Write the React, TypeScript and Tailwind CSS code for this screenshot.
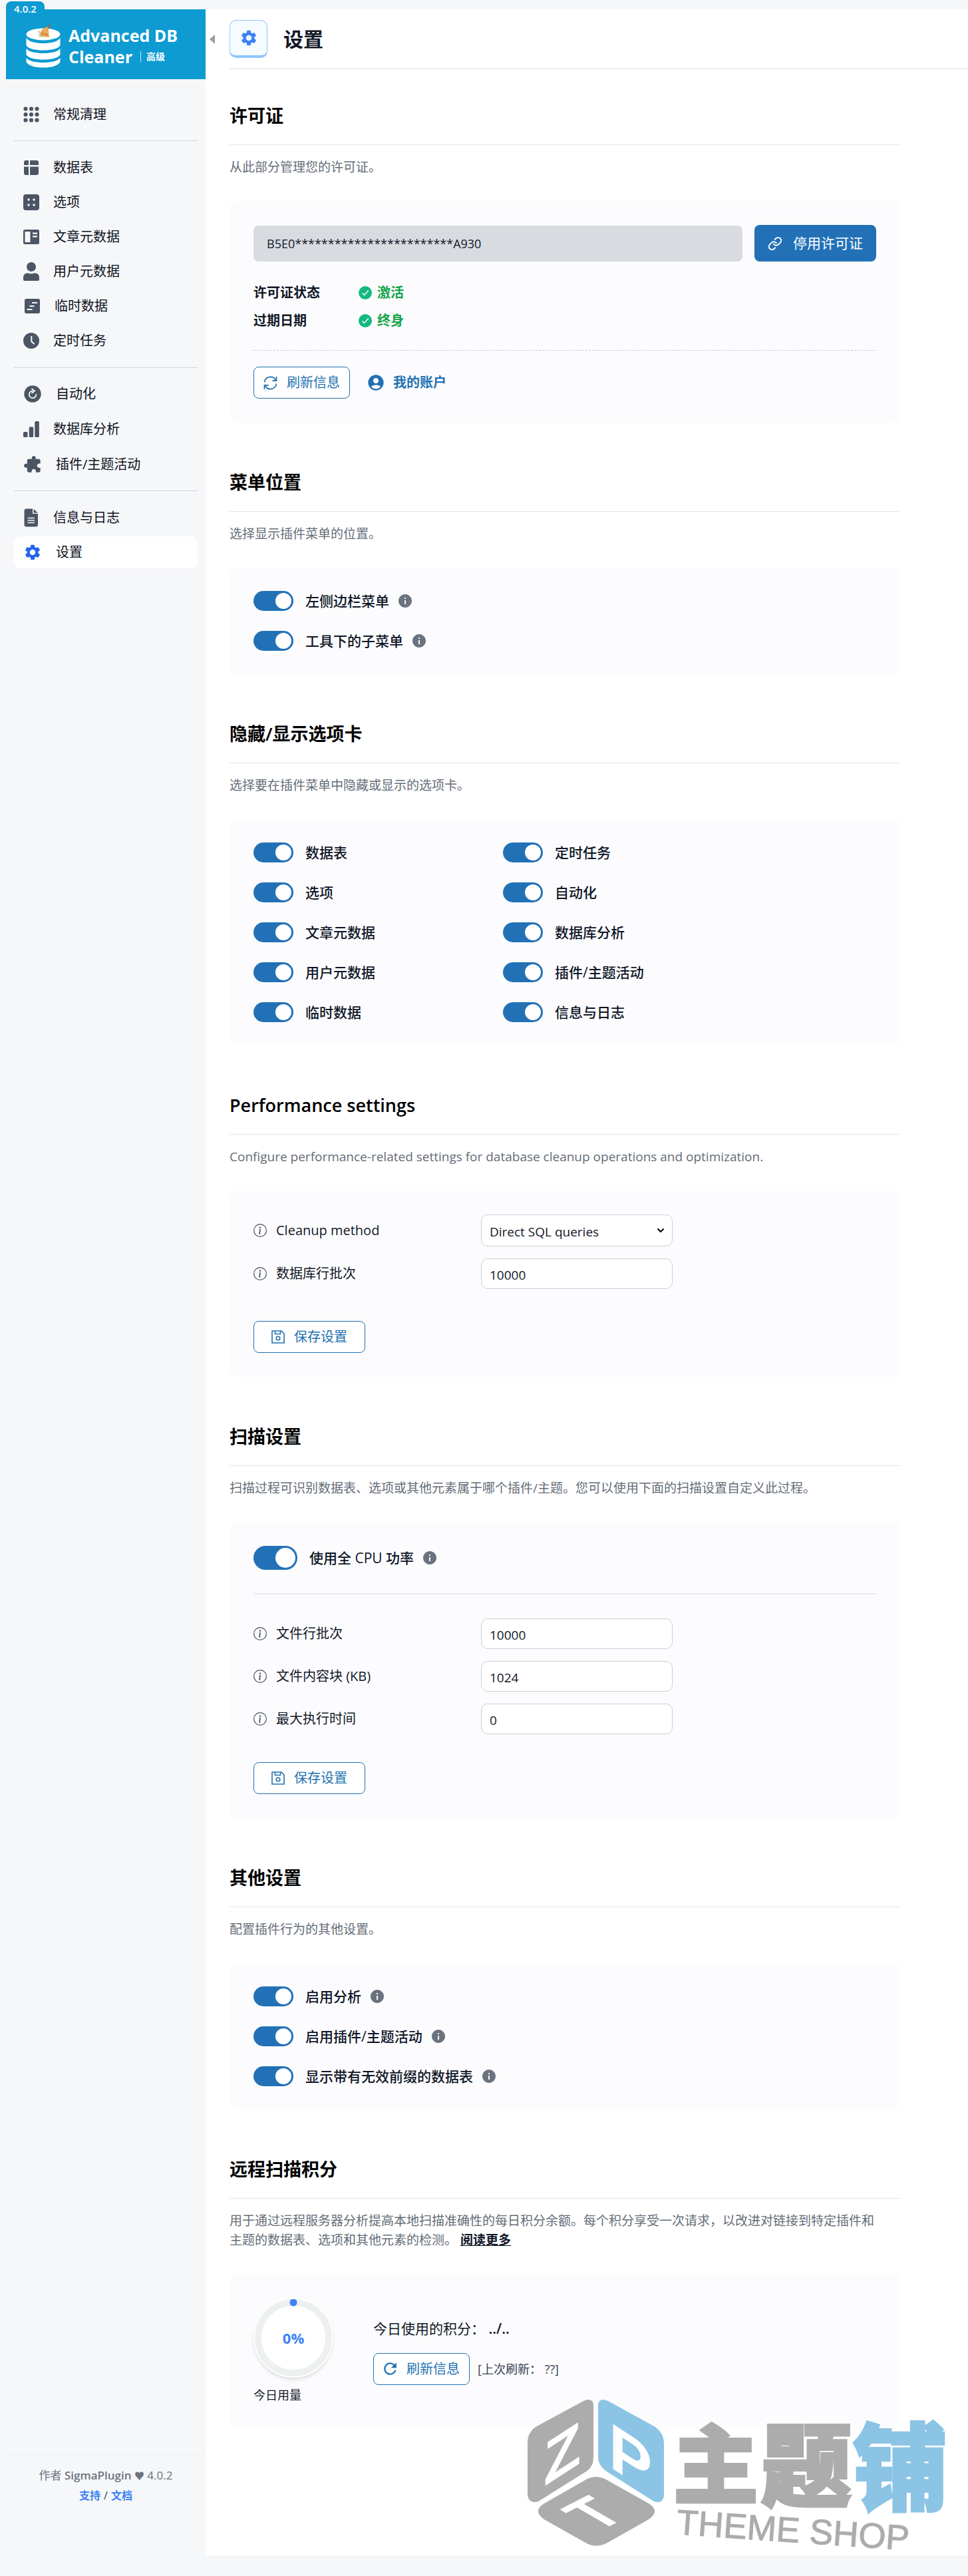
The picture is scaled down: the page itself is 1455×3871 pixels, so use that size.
import type { ReactNode } from "react";
import { Link as LinkIcon, ChevronDown } from "lucide-react";
import { MdAccountCircle, MdExtension, MdInfo, MdRefresh, MdSettings } from "react-icons/md";
import { BsInfoCircle } from "react-icons/bs";

const FONT = "font-['Open_Sans','Noto_Sans_CJK_SC',sans-serif]";

/* ---------- icons ---------- */

const GridDots = () => (
  <svg width="24" height="24" viewBox="0 0 24 24" fill="currentColor" aria-hidden="true">
    {[3.5, 12, 20.5].flatMap((y) => [3.5, 12, 20.5].map((x) => <circle key={`${x}-${y}`} cx={x} cy={y} r="3.1" />))}
  </svg>
);
const TableIcon = () => (
  <svg width="24" height="24" viewBox="0 0 24 24" fill="currentColor" aria-hidden="true">
    <path d="M4 1h4v7H1V4a3 3 0 0 1 3-3zM10 1h10a3 3 0 0 1 3 3v4H10zM1 10.500h7V23H4a3 3 0 0 1-3-3zM10 10.500H23V20a3 3 0 0 1-3 3h-10z" />
  </svg>
);
const OptionsIcon = () => (
  <svg width="24" height="24" viewBox="0 0 24 24" aria-hidden="true">
    <rect width="24" height="24" rx="4" fill="currentColor" />
    {[8, 16].flatMap((y) => [8, 16].map((x) => <circle key={`${x}-${y}`} cx={x} cy={y} r="1.800" fill="#f6f7f9" />))}
  </svg>
);
const ArticleIcon = () => (
  <svg width="24" height="24" viewBox="0 0 24 24" aria-hidden="true">
    <rect y="1" width="24" height="22" rx="2.500" fill="currentColor" />
    <path d="M2.500 4h8v16h-8zM14 5.500h7v2.300h-7zM14 10.300h7v2.300h-7z" fill="#f6f7f9" />
  </svg>
);
const UserIcon = () => (
  <svg width="24" height="28" viewBox="0 0 24 28" fill="currentColor" aria-hidden="true">
    <circle cx="12" cy="7" r="7" />
    <path d="M0 26v-3c0-4 2.500-6.500 6.500-6.500 1.800 0 3 .8 5.500.8s3.700-.8 5.500-.8c4 0 6.500 2.500 6.500 6.500v3c0 1.200-.8 2-2 2H2c-1.200 0-2-.8-2-2z" />
  </svg>
);
const TransientIcon = () => (
  <svg width="26" height="24" viewBox="0 0 26 24" aria-hidden="true">
    <rect x="2" y="1" width="23" height="22" rx="2.500" fill="currentColor" />
    <path d="M13 6h8v2h-8zM9.500 11h7v2h-7zM5.500 16h8v2h-8z" fill="#f6f7f9" />
  </svg>
);
const ClockIcon = () => (
  <svg width="24" height="24" viewBox="0 0 24 24" aria-hidden="true">
    <circle cx="12" cy="12" r="12" fill="currentColor" />
    <path d="M12.300 5v8l4.200 4" fill="none" stroke="#f6f7f9" strokeWidth="2" />
  </svg>
);
const AutomationIcon = () => (
  <svg width="28" height="28" viewBox="0 0 28 28" aria-hidden="true">
    <circle cx="14" cy="14" r="12.700" fill="currentColor" />
    <path d="M14.500 9.500A5.300 5.300 0 1 0 19.300 14" fill="none" stroke="#f6f7f9" strokeWidth="1.800" />
    <path d="M12.500 6l4.500 3.500-4.500 3.500" fill="none" stroke="#f6f7f9" strokeWidth="1.800" />
  </svg>
);
const BarsIcon = () => (
  <svg width="24" height="24" viewBox="0 0 24 24" fill="currentColor" aria-hidden="true">
    <rect y="16" width="6.500" height="8" rx="1.500" />
    <rect x="8.700" y="8.500" width="6.500" height="15.500" rx="1.500" />
    <rect x="17.300" width="6.500" height="24" rx="1.500" />
  </svg>
);
const DocIcon = () => (
  <svg width="24" height="28" viewBox="0 0 24 28" aria-hidden="true">
    <path d="M4 .5h10V8h8v16.500a3 3 0 0 1-3 3H4.500a3 3 0 0 1-3-3v-21a3 3 0 0 1 2.500-3zM15.500 1L22 6.800h-6.500z" fill="currentColor" />
    <path d="M6.500 14.500h10.500M6.500 18h10.500M6.500 21.500h10.500" stroke="#f6f7f9" strokeWidth="1.500" />
  </svg>
);
const SyncIcon = () => (
  <svg width="21" height="21" viewBox="0 0 21 21" fill="none" stroke="currentColor" strokeWidth="1.700" aria-hidden="true">
    <path d="M1.500 9.500A9 9 0 0 1 18.500 6.500M19.500 1v6.200h-6.200M19.500 11.500A9 9 0 0 1 2.500 14.500M1.500 20v-6.200h6.200" />
  </svg>
);
const SaveIcon = () => (
  <svg width="20" height="20" viewBox="0 0 20 20" fill="none" stroke="currentColor" strokeWidth="1.600" aria-hidden="true">
    <path d="M1 1h14l4 4v14H1zM5.500 1v4.500h8V1" />
    <circle cx="10" cy="12" r="2.800" />
  </svg>
);
const CheckBadge = () => (
  <svg width="20" height="20" viewBox="0 0 20 20" aria-hidden="true">
    <circle cx="10" cy="10" r="10" fill="#14b97f" />
    <path d="M5.500 10.500l3 3 6.300-7" fill="none" stroke="#fff" strokeWidth="1.500" />
  </svg>
);
const LogoIcon = () => (
  <svg width="52" height="66" viewBox="0 0 52 66" aria-hidden="true">
    <g fill="#fff">
      <ellipse cx="26" cy="15.500" rx="25.500" ry="9" />
      <path d="M.5 21c4 6 14 8 25.500 8s21.500-2 25.500-8v11c-3 5.500-13 7.500-25.500 7.500S3.500 37.500.5 32z" />
      <path d="M.5 37c4 5 14 7 25.500 7s21.500-2 25.500-7v9c-3 5.500-13 7.500-25.500 7.500S3.500 51.500.5 46z" />
      <path d="M.5 51c4 5 14 7 25.500 7s21.500-2 25.500-7v6c-3 6-13 8.500-25.500 8.500S3.500 63 .5 57z" />
    </g>
    <path d="M17 11c3 2 3 5 2 8l4 1-3-11z" fill="#c3dcc0" />
    <path d="M32 4c-7 3-12 7-10 13l-1 2 14 1c-1-5-1-11-1-15z" fill="#e9ab5c" />
    <path d="M32 5l4-5 1 1-3 6z" fill="#a8622f" />
    <path d="M22 15l12 2.500v-1.500l-11-3z" fill="#c98236" />
  </svg>
);

/* ---------- sidebar ---------- */

type Item = { label: string; icon: ReactNode; active?: boolean };

const groups: { items: Item[]; spacing: string }[] = [
  { spacing: "gap-1 pt-[29px] pb-[15px]", items: [{ label: "常规清理", icon: <GridDots /> }] },
  {
    spacing: "gap-1 pt-4 pb-4 border-t",
    items: [
      { label: "数据表", icon: <TableIcon /> },
      { label: "选项", icon: <OptionsIcon /> },
      { label: "文章元数据", icon: <ArticleIcon /> },
      { label: "用户元数据", icon: <UserIcon /> },
      { label: "临时数据", icon: <TransientIcon /> },
      { label: "定时任务", icon: <ClockIcon /> },
    ],
  },
  {
    spacing: "gap-[5px] pt-[15px] pb-[15px] border-t",
    items: [
      { label: "自动化", icon: <AutomationIcon /> },
      { label: "数据库分析", icon: <BarsIcon /> },
      { label: "插件/主题活动", icon: <MdExtension className="size-7 -scale-x-100" /> },
    ],
  },
  {
    spacing: "gap-1 pt-4 pb-4 border-t",
    items: [
      { label: "信息与日志", icon: <DocIcon /> },
      { label: "设置", icon: <MdSettings className="size-7 text-[#2563eb]" />, active: true },
    ],
  },
];

function Sidebar() {
  return (
    <aside className="flex w-[300px] shrink-0 flex-col">
      <div className="relative flex h-[105px] items-center gap-3 bg-[#0d9bd2] pl-[30px] pt-1 text-white">
        <span className="absolute -top-3 left-0 h-[22px] rounded-t-lg bg-[#0d9bd2] px-3 text-[15px] leading-[23px] font-semibold">4.0.2</span>
        <LogoIcon />
        <div className="text-[25px] leading-8 font-bold">
          <div>Advanced DB</div>
          <div className="flex items-center">
            Cleaner
            <span className="ml-3 border-l border-white/80 pl-2 text-sm leading-4">高级</span>
          </div>
        </div>
      </div>
      <nav className="px-3" aria-label="插件菜单">
        {groups.map((g, i) => (
          <ul key={i} className={`flex flex-col border-[#d2d5d9] ${g.spacing}`}>
            {g.items.map((it) => (
              <li key={it.label}>
                <a
                  href="#"
                  aria-current={it.active ? "page" : undefined}
                  className={`flex h-12 items-center gap-[21px] rounded-[10px] pl-[14px] text-xl text-[#0c1220] ${it.active ? "bg-white" : ""}`}
                >
                  <span className="text-[#4b5563]">{it.icon}</span>
                  {it.label}
                </a>
              </li>
            ))}
          </ul>
        ))}
      </nav>
      <footer className="mt-auto h-[152px] border-t border-[#eceef0] pt-4 text-center text-[#6b7280]">
        <p className="text-[17px] leading-[30px]">
          作者 <span className="font-semibold">SigmaPlugin</span> <span className="text-[15px]">♥</span> 4.0.2
        </p>
        <p className="text-base leading-[30px] font-bold text-[#374151]">
          <a href="#" className="text-[#3b82f6]">支持</a> <span className="mx-px font-normal">/</span>{" "}
          <a href="#" className="text-[#3b82f6]">文档</a>
        </p>
      </footer>
    </aside>
  );
}

/* ---------- form parts ---------- */

function InfoDot() {
  return <MdInfo viewBox="2 2 20 20" className="size-5 shrink-0 text-[#6b7280]" />;
}

function Toggle({ label, info, large }: { label: string; info?: boolean; large?: boolean }) {
  return (
    <label className="flex items-center text-[21px] leading-[30px] font-medium text-[#0d1526]">
      <input type="checkbox" role="switch" defaultChecked className="peer sr-only" />
      <span
        className={`flex shrink-0 justify-start rounded-full bg-gray-300 p-[3px] peer-checked:justify-end peer-checked:bg-[#2271b7] ${large ? "h-9 w-[66px]" : "h-[30px] w-[60px]"}`}
      >
        <span className={`rounded-full bg-white ${large ? "size-[30px]" : "size-6"}`} />
      </span>
      <span className="ml-[18px]">{label}</span>
      {info && (
        <span className="ml-[14px]">
          <InfoDot />
        </span>
      )}
    </label>
  );
}

function Section({ title, desc, children, card = "p-9" }: { title: string; desc: ReactNode; children: ReactNode; card?: string }) {
  return (
    <section className="mb-[70px]">
      <h2 className="border-b border-[#e5e7eb] pb-[23px] text-[27px] leading-10 font-semibold text-black">{title}</h2>
      <p className="mt-[19px] mb-9 pr-7 text-[19px] leading-[29px] text-[#646c77]">{desc}</p>
      <div className={`rounded-xl bg-[#fcfcfe] ${card}`}>{children}</div>
    </section>
  );
}

function OutlineButton({ icon, children, wide }: { icon: ReactNode; children: ReactNode; wide?: boolean }) {
  return (
    <button
      type="button"
      className={`flex h-12 items-center gap-[14px] rounded-lg border border-[#2271b1] bg-white text-xl text-[#2271b1] ${wide ? "px-[26px]" : "px-[14px]"}`}
    >
      {icon}
      {children}
    </button>
  );
}

function Row({ id, label, children }: { id: string; label: string; children: ReactNode }) {
  return (
    <div className="flex items-center">
      <label htmlFor={id} className="flex w-[342px] shrink-0 items-center gap-[14px] text-xl text-[#111827]">
        <BsInfoCircle className="size-5 text-[#4b5563]" />
        {label}
      </label>
      {children}
    </div>
  );
}

const fieldClass = "w-full rounded-[10px] border border-[#cbced3] bg-white px-3 pt-1 text-[19px] text-[#111827]";

function TextRow({ id, label, value }: { id: string; label: string; value: string }) {
  return (
    <Row id={id} label={label}>
      <div className="w-[288px]">
        <input id={id} defaultValue={value} className={`h-[46px] ${fieldClass}`} />
      </div>
    </Row>
  );
}

/* ---------- brand mark over the page corner ---------- */

function ThemeShopMark() {
  return (
    <svg
      className="pointer-events-none absolute right-9 bottom-[5px] overflow-visible"
      width="626"
      height="230"
      viewBox="0 0 626 230"
      role="img"
      aria-label="主题铺 THEME SHOP"
    >
      <path d="M99 9Q98-3 84 3L12 42Q0 50 0 65V145Q2 158 16 154L88 109Q99 102 99 88Z" fill="#acacac" />
      <path d="M106 9Q107-3 121 3L192 42Q205 52 205 66V146Q203 158 190 154L119 109Q106 100 106 88Z" fill="#8bc4e5" />
      <path d="M88 121Q103 113 118 121L182 157Q200 168 182 181L120 216Q103 225 87 216L25 181Q7 168 25 157Z" fill="#acacac" />
      <g fill="#fff" fontFamily="Liberation Sans, sans-serif" fontWeight="700">
        <text x="0" y="0" fontSize="92" transform="translate(24 132) skewY(-33)">Z</text>
        <text x="0" y="0" fontSize="98" transform="translate(122 101) skewY(33)">P</text>
        <text x="0" y="0" fontSize="82" transform="translate(106 200) rotate(-27) skewX(33)">T</text>
      </g>
      <g fontFamily="Noto Sans CJK SC, sans-serif" fontWeight="900" strokeWidth="4">
        <text x="219" y="147" fontSize="128" fill="#acacac" stroke="#acacac">主</text>
        <text x="351" y="151" fontSize="136" fill="#acacac" stroke="#acacac">题</text>
        <text x="489" y="156" fontSize="142" fill="#8bc4e5" stroke="#8bc4e5">铺</text>
      </g>
      <text x="0" y="0" fontSize="53" fill="#acacac" stroke="#acacac" fontFamily="Liberation Sans, sans-serif" transform="translate(223 203) rotate(4)">
        THEME SHOP
      </text>
    </svg>
  );
}

/* ---------- page ---------- */

const tabsLeft = ["数据表", "选项", "文章元数据", "用户元数据", "临时数据"];
const tabsRight = ["定时任务", "自动化", "数据库分析", "插件/主题活动", "信息与日志"];

export default function App() {
  return (
    <div className={`flex min-h-screen bg-[#f6f7f9] pt-[14px] pb-[31px] pl-[9px] ${FONT}`}>
      <Sidebar />
      <main className="relative flex-1 bg-white pl-9">
        <button type="button" aria-label="收起菜单" className="absolute top-[38px] left-[6px]">
          <svg width="8" height="14" viewBox="0 0 8 14" fill="#9a9da2" aria-hidden="true">
            <path d="M8 0v14L0 7z" />
          </svg>
        </button>
        <header className="flex items-center gap-6 border-b border-[#dcdfe2] py-4">
          <span className="flex size-[57px] items-center justify-center rounded-[10px] border border-b-4 border-[#93c5fd] bg-[#f5fcff]">
            <MdSettings className="size-7 text-[#3b82f6]" />
          </span>
          <h1 className="text-[30px] leading-10 font-bold text-[#111827]">设置</h1>
        </header>

        <div className="pt-[50px] pr-[102px] pb-[117px]">
          <Section title="许可证" desc="从此部分管理您的许可证。">
            <div className="flex items-center gap-[18px]">
              <input
                readOnly
                aria-label="许可证密钥"
                value="B5E0************************A930"
                className="h-[54px] min-w-0 flex-1 rounded-lg bg-[#d8dbe0] px-5 text-lg text-[#111827]"
              />
              <button type="button" className="flex h-[55px] items-center gap-4 rounded-lg bg-[#2271b7] px-5 text-[21px] text-white">
                <LinkIcon size={22} strokeWidth={2.2} />
                停用许可证
              </button>
            </div>
            <dl className="mt-[26px] grid grid-cols-[158px_1fr] text-xl leading-[42px] font-bold text-[#111827]">
              <dt>许可证状态</dt>
              <dd className="flex items-center gap-2 text-[#16a34a]"><CheckBadge />激活</dd>
              <dt>过期日期</dt>
              <dd className="flex items-center gap-2 text-[#16a34a]"><CheckBadge />终身</dd>
            </dl>
            <div className="mt-[23px] flex items-center gap-[25px] border-t border-dashed border-[#c9ccd1] pt-6">
              <OutlineButton icon={<SyncIcon />}>刷新信息</OutlineButton>
              <a href="#" className="flex items-center gap-3 text-xl font-bold text-[#2271b1]">
                <MdAccountCircle className="size-7" />
                我的账户
              </a>
            </div>
          </Section>

          <Section title="菜单位置" desc="选择显示插件菜单的位置。" card="px-9 py-[35px] grid gap-[30px]">
            <Toggle label="左侧边栏菜单" info />
            <Toggle label="工具下的子菜单" info />
          </Section>

          <Section title="隐藏/显示选项卡" desc="选择要在插件菜单中隐藏或显示的选项卡。" card="px-9 py-[35px] flex">
            <div className="grid w-[375px] gap-[30px]">{tabsLeft.map((t) => <Toggle key={t} label={t} />)}</div>
            <div className="grid gap-[30px]">{tabsRight.map((t) => <Toggle key={t} label={t} />)}</div>
          </Section>

          <Section
            title="Performance settings"
            desc="Configure performance-related settings for database cleanup operations and optimization."
          >
            <div className="mb-12 grid gap-[18px]">
              <Row id="method" label="Cleanup method">
                <div className="relative w-[288px]">
                  <select id="method" className={`h-12 appearance-none ${fieldClass}`}>
                    <option>Direct SQL queries</option>
                  </select>
                  <ChevronDown size={16} strokeWidth={3} className="pointer-events-none absolute top-4 right-[10px]" />
                </div>
              </Row>
              <TextRow id="db-rows" label="数据库行批次" value="10000" />
            </div>
            <OutlineButton wide icon={<SaveIcon />}>保存设置</OutlineButton>
          </Section>

          <Section
            title="扫描设置"
            desc="扫描过程可识别数据表、选项或其他元素属于哪个插件/主题。您可以使用下面的扫描设置自定义此过程。"
          >
            <Toggle label="使用全 CPU 功率" info large />
            <div className="mt-[35px] mb-[42px] grid gap-[18px] border-t-2 border-[#e9ebee] pt-9">
              <TextRow id="file-rows" label="文件行批次" value="10000" />
              <TextRow id="file-chunk" label="文件内容块 (KB)" value="1024" />
              <TextRow id="max-time" label="最大执行时间" value="0" />
            </div>
            <OutlineButton wide icon={<SaveIcon />}>保存设置</OutlineButton>
          </Section>

          <Section title="其他设置" desc="配置插件行为的其他设置。" card="px-9 py-[35px] grid gap-[30px]">
            <Toggle label="启用分析" info />
            <Toggle label="启用插件/主题活动" info />
            <Toggle label="显示带有无效前缀的数据表" info />
          </Section>

          <Section
            title="远程扫描积分"
            desc={
              <>
                用于通过远程服务器分析提高本地扫描准确性的每日积分余额。每个积分享受一次请求，以改进对链接到特定插件和主题的数据表、选项和其他元素的检测。{" "}
                <a href="#" className="font-bold text-[#0d1526] underline">阅读更多</a>
              </>
            }
          >
            <div className="flex items-center gap-[60px]">
              <div>
                <div className="relative flex size-[120px] items-center justify-center rounded-full border-2 border-white bg-white shadow-md">
                  <svg width="116" height="116" viewBox="0 0 116 116" aria-hidden="true">
                    <circle cx="58" cy="58" r="53" fill="none" stroke="#edf0f1" strokeWidth="10" />
                    <circle cx="58" cy="5" r="5.500" fill="#3b82f6" />
                  </svg>
                  <span className="absolute text-[22px] font-bold text-[#3b82f6]">0%</span>
                </div>
                <div className="mt-3 text-lg leading-[29px] text-[#111827]">今日用量</div>
              </div>
              <div>
                <p className="mb-[22px] text-[21px] leading-[30px] text-[#111827]">
                  今日使用的积分： <span className="font-semibold">../..</span>
                </p>
                <div className="flex items-center gap-3">
                  <OutlineButton icon={<MdRefresh className="size-[21px]" viewBox="3 3 18 18" />}>刷新信息</OutlineButton>
                  <span className="text-lg text-[#374151]">[上次刷新： ??]</span>
                </div>
              </div>
            </div>
          </Section>
        </div>
        <ThemeShopMark />
      </main>
    </div>
  );
}
